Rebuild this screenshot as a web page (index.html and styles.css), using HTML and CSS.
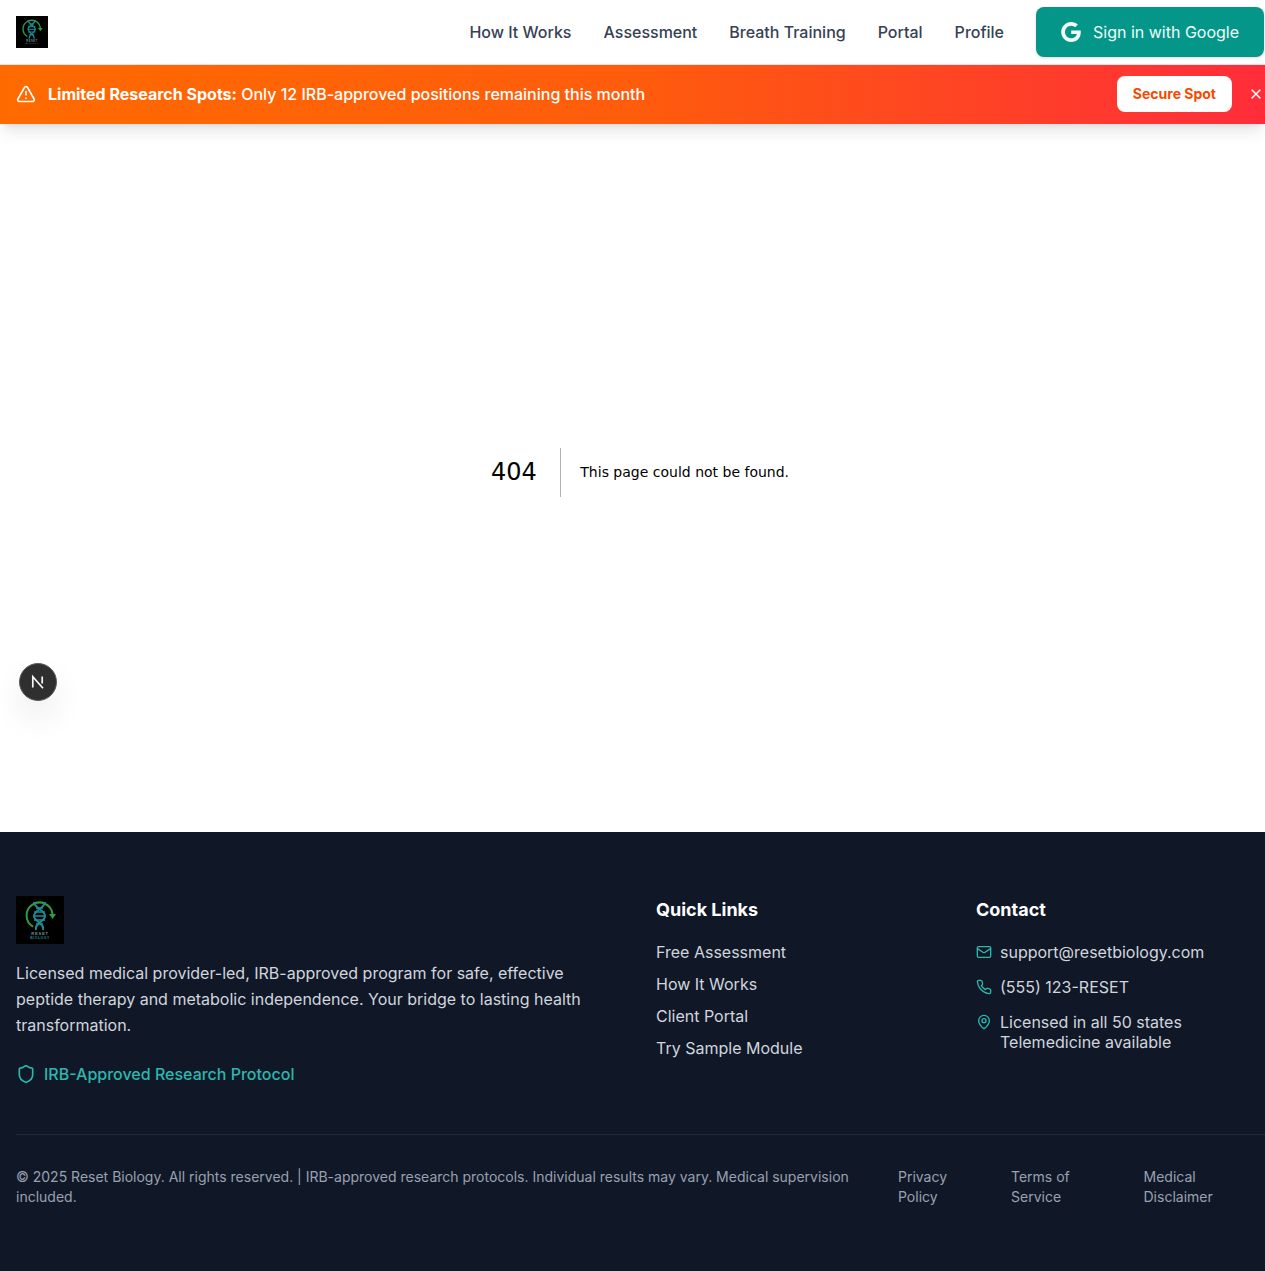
FILE: index.html
```html
<!DOCTYPE html>
<html lang="en">
<head>
<meta charset="utf-8">
<title>Reset Biology</title>
<link rel="stylesheet" href="styles.css">
</head>
<body>
<header class="nav">
  <a class="nav-logo">
    <svg class="logo-sm" viewBox="0 0 48 48">
      <rect width="48" height="48" fill="#000"/>
      <path d="M17 30.700A13 13 0 1 1 36.500 18" fill="none" stroke="#2f9e3a" stroke-width="2"/>
      <path d="M33 18h7l-3.500 5z" fill="#2f9e3a"/>
      <path d="M18 6c0 6 11 8 11 14s-11 7-9 14M29 6c0 6-11 8-11 14s11 7 9 14" fill="none" stroke="#1a8d96" stroke-width="2"/>
      <path d="M20 12h7M18 16h11M18 20h11M18 24h11M20 28h7" stroke="#1a8d96" stroke-width="1.500"/>
      <text class="logo-t1" x="24" y="38.500" text-anchor="middle">RESET</text>
      <text class="logo-t2" x="24" y="42.500" text-anchor="middle">BIOLOGY</text>
    </svg>
  </a>
  <nav class="nav-links">
    <a>How It Works</a>
    <a>Assessment</a>
    <a>Breath Training</a>
    <a>Portal</a>
    <a>Profile</a>
    <button class="google">
      <svg viewBox="0 0 24 24" width="20" height="20" class="g-icon"><path fill="currentColor" d="M12.240 10.285V14.400h6.806c-.275 1.765-2.056 5.174-6.806 5.174-4.095 0-7.439-3.389-7.439-7.574s3.345-7.574 7.439-7.574c2.330 0 3.891.989 4.785 1.849l3.254-3.138C18.189 1.186 15.479 0 12.240 0c-6.635 0-12 5.365-12 12s5.365 12 12 12c6.926 0 11.520-4.869 11.520-11.726 0-.788-.085-1.390-.189-1.989H12.240z"/></svg>
      Sign in with Google
    </button>
  </nav>
</header>
<div class="banner">
  <div class="banner-msg">
    <svg class="icon" viewBox="0 0 24 24" width="20" height="20"><path d="M21.730 18l-8-14a2 2 0 0 0-3.480 0l-8 14A2 2 0 0 0 4 21h16a2 2 0 0 0 1.730-3"/><path d="M12 9v4"/><path d="M12 17h.01"/></svg>
    <p><strong>Limited Research Spots:</strong> Only 12 IRB-approved positions remaining this month</p>
  </div>
  <div class="banner-actions">
    <button class="secure">Secure Spot</button>
    <button class="close" aria-label="Close"><svg class="icon" viewBox="0 0 24 24" width="16" height="16"><path d="M18 6 6 18"/><path d="m6 6 12 12"/></svg></button>
  </div>
</div>
<main class="main">
  <div class="nf">
    <h1>404</h1>
    <h2>This page could not be found.</h2>
  </div>
  <div class="dev"><svg viewBox="0 0 18 18" width="18" height="18"><path d="M3.800 14.500V3.800L14 15.200M13.200 3.500v7" fill="none" stroke="#f7f7f7" stroke-width="1.700"/></svg></div>
</main>
<footer class="footer">
  <div class="grid">
    <div class="about">
      <svg class="logo-lg" viewBox="0 0 48 48">
        <rect width="48" height="48" fill="#000"/>
        <path d="M17 30.700A13 13 0 1 1 36.500 18" fill="none" stroke="#2f9e3a" stroke-width="2"/>
        <path d="M33 18h7l-3.500 5z" fill="#2f9e3a"/>
        <path d="M18 6c0 6 11 8 11 14s-11 7-9 14M29 6c0 6-11 8-11 14s11 7 9 14" fill="none" stroke="#1a8d96" stroke-width="2"/>
        <path d="M20 12h7M18 16h11M18 20h11M18 24h11M20 28h7" stroke="#1a8d96" stroke-width="1.500"/>
        <text class="logo-t1" x="24" y="38.500" text-anchor="middle">RESET</text>
        <text class="logo-t2" x="24" y="42.500" text-anchor="middle">BIOLOGY</text>
      </svg>
      <p class="blurb">Licensed medical provider-led, IRB-approved program for safe, effective peptide therapy and metabolic independence. Your bridge to lasting health transformation.</p>
      <div class="irb">
        <svg class="icon" viewBox="0 0 24 24" width="20" height="20"><path d="M20 13c0 5-3.500 7.500-7.660 8.950a1 1 0 0 1-.67-.01C7.500 20.500 4 18 4 13V6a1 1 0 0 1 1-1c2 0 4.500-1.200 6.240-2.720a1.170 1.170 0 0 1 1.520 0C14.510 3.810 17 5 19 5a1 1 0 0 1 1 1z"/></svg>
        <span>IRB-Approved Research Protocol</span>
      </div>
    </div>
    <div>
      <h3>Quick Links</h3>
      <ul class="links">
        <li>Free Assessment</li>
        <li>How It Works</li>
        <li>Client Portal</li>
        <li>Try Sample Module</li>
      </ul>
    </div>
    <div>
      <h3>Contact</h3>
      <ul class="contact">
        <li><svg class="icon" viewBox="0 0 24 24" width="16" height="16"><rect x="2" y="4" width="20" height="16" rx="2"/><path d="m22 7-8.970 5.700a1.940 1.940 0 0 1-2.060 0L2 7"/></svg><span>support@resetbiology.com</span></li>
        <li><svg class="icon" viewBox="0 0 24 24" width="16" height="16"><path d="M22 16.920v3a2 2 0 0 1-2.180 2 19.790 19.790 0 0 1-8.630-3.070 19.500 19.500 0 0 1-6-6 19.790 19.790 0 0 1-3.070-8.670A2 2 0 0 1 4.110 2h3a2 2 0 0 1 2 1.720 12.840 12.840 0 0 0 .7 2.810 2 2 0 0 1-.45 2.110L8.090 9.910a16 16 0 0 0 6 6l1.270-1.270a2 2 0 0 1 2.110-.45 12.840 12.840 0 0 0 2.810.7A2 2 0 0 1 22 16.920z"/></svg><span>(555) 123-RESET</span></li>
        <li class="loc"><svg class="icon" viewBox="0 0 24 24" width="16" height="16"><path d="M20 10c0 5-5.540 10.190-7.400 11.800a1 1 0 0 1-1.200 0C9.540 20.190 4 15 4 10a8 8 0 0 1 16 0"/><circle cx="12" cy="10" r="3"/></svg><span>Licensed in all 50 states<br>Telemedicine available</span></li>
      </ul>
    </div>
  </div>
  <div class="bottom">
    <p class="copy">© 2025 Reset Biology. All rights reserved. | IRB-approved research protocols. Individual results may vary. Medical supervision included.</p>
    <div class="legal">
      <a>Privacy Policy</a>
      <a>Terms of Service</a>
      <a>Medical Disclaimer</a>
    </div>
  </div>
</footer>
</body>
</html>
```
FILE: styles.css
```css
* { box-sizing: border-box; }
html, body { margin: 0; padding: 0; overflow-x: hidden; }
body { font-family: Inter, "Liberation Sans", sans-serif; color: #111827; background: #fff; }
p, h1, h2, h3, ul { margin: 0; padding: 0; }
ul { list-style: none; }
button { font-family: inherit; border: 0; cursor: pointer; }
.icon { fill: none; stroke: currentColor; stroke-width: 2; stroke-linecap: round; stroke-linejoin: round; flex: none; }
.logo-t1 { font: 700 4px "Liberation Sans", sans-serif; fill: #7d8c90; letter-spacing: .8px; }
.logo-t2 { font: 700 3.500px "Liberation Sans", sans-serif; fill: #178a92; letter-spacing: .5px; }

.nav { height: 65px; padding: 0 1px 0 16px; display: flex; align-items: center; justify-content: space-between; background: #fff; border-bottom: 1px solid #e5e7eb; }
.nav-logo { display: flex; }
.logo-sm { width: 32px; height: 32px; display: block; }
.nav-links { display: flex; align-items: center; gap: 32px; font-size: 16px; font-weight: 500; color: #364153; line-height: 24px; }
.google { display: flex; align-items: center; gap: 12px; width: 228px; height: 50px; padding: 0 0 0 25px; background: #049789; color: #f0fdfa; font-size: 16px; font-weight: 400; border-radius: 8px; box-shadow: 0 1px 3px rgba(0,0,0,.15); }
.g-icon { flex: none; }

.banner { position: relative; z-index: 1; height: 59px; padding: 0 0 1px 16px; display: flex; align-items: center; justify-content: space-between; color: #fff; background: linear-gradient(90deg, #ff6a00 0%, #ff5c0c 50%, #ff2d3a 100%); box-shadow: 0 10px 15px -3px rgba(0,0,0,.1), 0 4px 6px -4px rgba(0,0,0,.1); }
.banner-msg { display: flex; align-items: center; gap: 12px; font-size: 16px; font-weight: 500; }
.banner-msg strong { font-weight: 700; }
.banner-actions { display: flex; align-items: center; gap: 16px; }
.secure { height: 36px; padding: 0 16px 1px; background: #fff; color: #f54900; font-size: 14px; font-weight: 700; border-radius: 8px; }
.close { display: flex; padding: 0 1px 0 0; background: none; color: #fff; }

.main { position: relative; height: 708px; padding-left: 491px; display: flex; align-items: center; background: #fff; }
.nf { display: flex; align-items: center; height: 49px; color: #000; font-family: "DejaVu Sans", sans-serif; margin-bottom: 12px; }
.nf h1 { font-size: 24px; font-weight: 500; line-height: 49px; padding-right: 23px; margin-right: 19.500px; border-right: 1px solid rgba(0,0,0,.3); }
.nf h2 { font-size: 14px; font-weight: 400; line-height: 49px; }
.dev { position: absolute; left: 19px; top: 539px; width: 38px; height: 38px; display: flex; align-items: center; justify-content: center; background: #2f2f2f; border-radius: 50%; border: 1px solid #5c5c5c; box-shadow: 0 16px 32px rgba(0,0,0,.08); }

.footer { height: 439px; padding: 64px 0 0 16px; background: #101828; color: #d1d5dc; overflow: hidden; }
.grid { width: 1248px; display: grid; grid-template-columns: repeat(4, 288px); column-gap: 32px; height: 238px; }
.about { grid-column: span 2; }
.logo-lg { display: block; width: 48px; height: 48px; margin-bottom: 16px; }
.blurb { font-size: 16px; line-height: 26px; margin-bottom: 24px; width: 576px; }
.irb { display: flex; align-items: center; gap: 8px; color: #2db7ad; font-size: 16px; font-weight: 500; line-height: 24px; }
.footer h3 { color: #fff; font-size: 18px; font-weight: 700; line-height: 28px; margin-bottom: 16px; }
.links li { font-size: 16px; line-height: 24px; margin-bottom: 8px; }
.contact { font-size: 16px; line-height: 20px; padding-top: 2px; }
.contact li { display: flex; align-items: center; gap: 8px; margin-bottom: 15px; }
.contact .icon { color: #2db7ad; }
.contact .loc { align-items: flex-start; }
.contact .loc .icon { margin-top: 2px; }

.bottom { width: 1264px; border-top: 1px solid #1e2939; padding-top: 32px; display: flex; align-items: flex-start; gap: 32px; color: #99a1af; font-size: 14px; line-height: 20px; }
.copy { width: 850px; flex: none; }
.legal { display: grid; grid-template-columns: 113px 132.500px 120px; }
.legal a { display: block; width: 70px; }
.legal a:last-child { width: 90px; }
```
